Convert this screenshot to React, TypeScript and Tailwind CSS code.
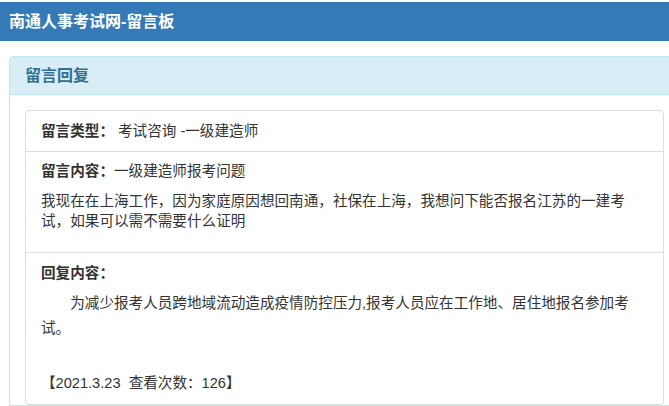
import React from "react";

const font = "font-['Liberation_Sans','Noto_Sans_CJK_SC',sans-serif]";

export default function App() {
  return <div className={`w-full h-[406px] overflow-hidden bg-white ${font}`}>
    <div className="mt-[2px] h-[39px] bg-[#337ab7] flex items-center px-[9px] text-white font-bold text-[16px] leading-[20px]">
      南通人事考试网-留言板
    </div>
    <div className="ml-[9px] mt-[15px] w-[671px] border border-[#bce8f1] rounded-t-[4px]">
      <div className="h-[38px] bg-[#d9edf7] border-b border-[#bce8f1] pl-[15px] flex items-center text-[#31708f] font-bold text-[16px] leading-[20px]">
        留言回复
      </div>
      <div className="px-[15px] pt-[15px]">
        <div className="border border-[#ddd] rounded-[4px] text-[#333] text-[14.6px] leading-[20px]">
          <div className="h-[41px] px-[15px] flex items-center border-b border-[#ddd]">
            <span className="font-bold">留言类型：</span>
            <span className="ml-[4px]">考试咨询 -一级建造师</span>
          </div>
          <div className="px-[15px] pt-[9px] pb-[21px] border-b border-[#ddd]">
            <div><span className="font-bold">留言内容：</span>一级建造师报考问题</div>
            <p className="mt-[10px]">我现在在上海工作，因为家庭原因想回南通，社保在上海，我想问下能否报名江苏的一建考试，如果可以需不需要什么证明</p>
          </div>
          <div className="px-[15px] pt-[10px] pb-[11px]">
            <div className="font-bold">回复内容：</div>
            <p className="mt-[8px] leading-[25px] indent-[2em]">为减少报考人员跨地域流动造成疫情防控压力,报考人员应在工作地、居住地报名参加考试。</p>
            <div className="mt-[32px]">【2021.3.23&nbsp;&nbsp;查看次数：126】</div>
          </div>
        </div>
      </div>
    </div>
  </div>
}
